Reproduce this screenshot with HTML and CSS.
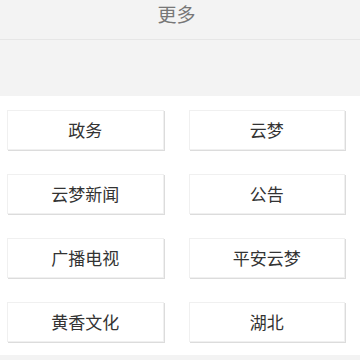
FILE: index.html
```html
<!DOCTYPE html>
<html lang="zh">
<head>
    <meta charset="UTF-8">
    <meta name="viewport" content="width=device-width, initial-scale=1.0">
    <title>更多</title>
    <link rel="stylesheet" href="styles.css">
</head>
<body>
    <div class="header">
        <p class="title">更多</p>
    </div>
    <div class="banner"></div>
    <div class="menu">
        <a class="item">政务</a>
        <a class="item">云梦</a>
        <a class="item">云梦新闻</a>
        <a class="item">公告</a>
        <a class="item">广播电视</a>
        <a class="item">平安云梦</a>
        <a class="item">黄香文化</a>
        <a class="item">湖北</a>
    </div>
    <div class="footer"></div>
</body>
</html>
```

FILE: styles.css
```css
body {
    margin: 0;
    background: #fff;
    font-family: "Noto Sans CJK SC", "Liberation Sans", sans-serif;
}
.header {
    height: 39px;
    background: #f3f3f3;
    border-bottom: 1px solid #e6e6e6;
    padding-right: 7px;
}
.title {
    margin: 0;
    line-height: 28px;
    text-align: center;
    font-size: 19px;
    color: #777;
}
.banner {
    height: 56px;
    background: #f3f3f3;
}
.menu {
    display: grid;
    grid-template-columns: 1fr 1fr;
    column-gap: 25px;
    row-gap: 24px;
    padding: 14px 15px 13px 7px;
}
.item {
    height: 38px;
    line-height: 38px;
    text-align: center;
    font-size: 17px;
    color: #333;
    border: 1px solid #f0f0f0;
    box-shadow: 1px 1px 0 #dcdcdc;
}
.footer {
    height: 20px;
    background: #f3f3f3;
}
```
